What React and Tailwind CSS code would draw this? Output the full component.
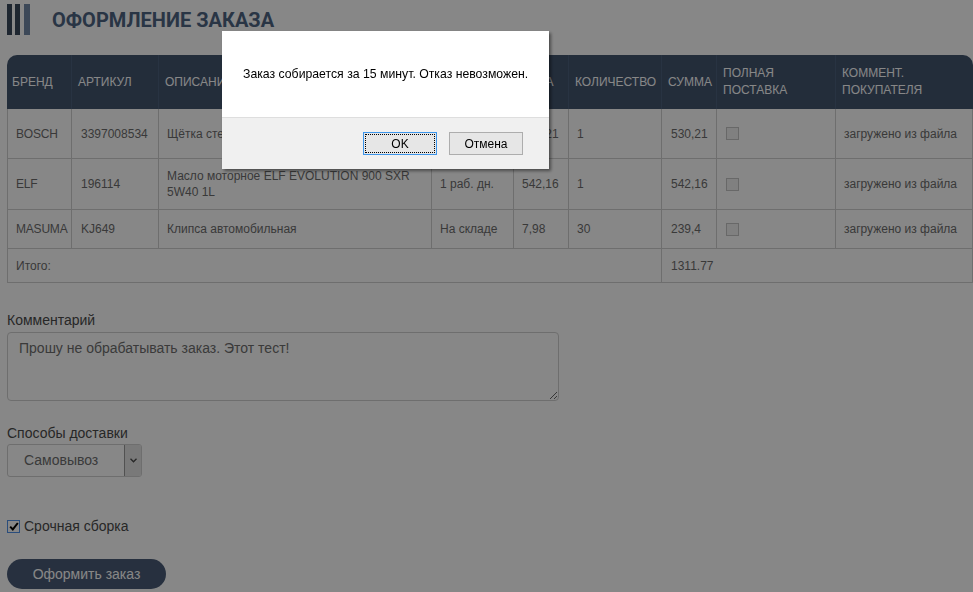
import React from 'react';

const rows = [
  {
    brand: 'BOSCH',
    article: '3397008534',
    descr: 'Щётка стеклоочистителя 600 мм',
    stock: 'На складе',
    price: '530,21',
    qty: '1',
    sum: '530,21',
    h: 'h-[50px]',
  },
  {
    brand: 'ELF',
    article: '196114',
    descr: 'Масло моторное ELF EVOLUTION 900 SXR 5W40 1L',
    stock: '1 раб. дн.',
    price: '542,16',
    qty: '1',
    sum: '542,16',
    h: 'h-[51px]',
  },
  {
    brand: 'MASUMA',
    article: 'KJ649',
    descr: 'Клипса автомобильная',
    stock: 'На складе',
    price: '7,98',
    qty: '30',
    sum: '239,4',
    h: 'h-[39px]',
  },
];

const th = 'border-r border-[#4d617d] px-[6px] text-left align-middle font-normal uppercase leading-[17px]';
const td = 'border-b border-r border-[#d0d0d0] pl-[8px] pr-[4px] align-middle leading-[16px]';

const App = () => {
  return (
    <div className="relative min-h-screen bg-white pl-[7px] pt-[4px] font-['Liberation_Sans',Arial,sans-serif] text-[#4b4b4b]">
      {/* page title */}
      <div className="flex items-start">
        <div className="flex h-[31px] gap-[3px]">
          <div className="w-[5px] bg-[#39485c]" />
          <div className="w-[5px] bg-[#39485c]" />
          <div className="ml-[1px] w-[6px] bg-[#7188a6]" />
        </div>
        <h1 className="ml-[22px] mt-[4px] font-['Roboto',sans-serif] text-[20px] font-bold leading-[24px] text-[#4f6583]">
          ОФОРМЛЕНИЕ ЗАКАЗА
        </h1>
      </div>

      {/* order table */}
      <table className="mt-[20px] w-[966px] table-fixed border-separate border-spacing-0 text-[12px] text-[#6d6d6d]">
        <colgroup>
          <col className="w-[65px]" />
          <col className="w-[87px]" />
          <col className="w-[273px]" />
          <col className="w-[82px]" />
          <col className="w-[55px]" />
          <col className="w-[93px]" />
          <col className="w-[55px]" />
          <col className="w-[119px]" />
          <col className="w-[137px]" />
        </colgroup>
        <thead>
          <tr className="h-[54px] bg-[#42556f] text-white">
            <th className={`${th} rounded-tl-[10px] pl-[5px]`}>Бренд</th>
            <th className={th}>Артикул</th>
            <th className={th}>Описание</th>
            <th className={th}>Наличие</th>
            <th className={th}>Цена</th>
            <th className={th}>Количество</th>
            <th className={th}>Сумма</th>
            <th className={th}>Полная поставка</th>
            <th className={`${th} rounded-tr-[10px] border-r-0`}>Коммент. покупателя</th>
          </tr>
        </thead>
        <tbody>
          {rows.map((r) => (
            <tr key={r.article} className={r.h}>
              <td className={`${td} border-l pl-[7px] tracking-[-0.2px]`}>{r.brand}</td>
              <td className={`${td} pl-[9px]`}>{r.article}</td>
              <td className={td}>{r.descr}</td>
              <td className={td}>{r.stock}</td>
              <td className={td}>{r.price}</td>
              <td className={td}>{r.qty}</td>
              <td className={`${td} pl-[9px]`}>{r.sum}</td>
              <td className={`${td} pl-[9px]`}>
                <div className="h-[13px] w-[13px] border border-[#c4c4c4] bg-[#f2f2f2]" />
              </td>
              <td className={td}>загружено из файла</td>
            </tr>
          ))}
          <tr className="h-[34px]">
            <td colSpan={6} className={`${td} border-l`}>Итого:</td>
            <td colSpan={3} className={`${td} pl-[9px]`}>1311.77</td>
          </tr>
        </tbody>
      </table>

      {/* comment */}
      <div className="mt-[29px] text-[14px] leading-4">Комментарий</div>
      <textarea
        defaultValue="Прошу не обрабатывать заказ. Этот тест!"
        className="mt-[4px] block h-[69px] w-[552px] rounded-[4px] border border-[#d0d0d0] bg-white pl-[11px] pt-[7px] text-[14px] leading-4 text-[#6e6e6e] outline-none"
      />

      {/* delivery */}
      <div className="mt-[24px] text-[14px] leading-4">Способы доставки</div>
      <div className="mt-[3px] flex h-[33px] w-[135px] overflow-hidden rounded-[3px] border border-[#d0d0d0] bg-white text-[14px] text-[#6e6e6e]">
        <div className="flex flex-1 items-center pl-[16px]">Самовывоз</div>
        <div className="flex w-[17px] items-center justify-center border-l border-[#9a9a9a] bg-[#e4e4e4]">
          <svg width="7" height="5" viewBox="0 0 7 5" fill="none">
            <path d="M0.5 0.8 L3.5 3.8 L6.5 0.8" stroke="#4a4a4a" strokeWidth="1.3" />
          </svg>
        </div>
      </div>

      {/* urgent */}
      <label className="mt-[41px] flex h-4 items-center text-[14px] leading-4">
        <span className="flex h-[13px] w-[13px] items-center justify-center border border-[#5091eb] bg-white">
          <svg width="10" height="9" viewBox="0 0 10 9" fill="none">
            <path d="M1.2 4.6 L3.8 7.4 L8.8 1" stroke="#000" strokeWidth="2" />
          </svg>
        </span>
        <span className="ml-[4px]">Срочная сборка</span>
      </label>

      <button className="mt-[25px] h-[30px] w-[159px] rounded-full bg-[#4a5c77] text-[14px] text-white">
        Оформить заказ
      </button>

      {/* modal */}
      <div className="fixed inset-0 bg-black/[0.47]" />
      <div className="fixed left-[222px] top-[31px] w-[327px] bg-white text-[12px] text-black shadow-[2px_2px_3px_rgba(0,0,0,0.45)]">
        <div className="flex h-[86px] items-center pl-[21px] text-[12.25px]">
          Заказ собирается за 15 минут. Отказ невозможен.
        </div>
        <div className="flex h-[52px] items-start justify-end gap-[12px] border-t border-[#dedede] bg-[#f0f0f0] pr-[26px] pt-[14px]">
          <button className="h-[23px] w-[74px] border border-[#3d95ea] bg-[#e6e6e6] p-[1px]">
            <span className="flex h-full w-full items-center justify-center border border-dotted border-black">
              OK
            </span>
          </button>
          <button className="h-[23px] w-[74px] border border-[#adadad] bg-[#e6e6e6]">Отмена</button>
        </div>
      </div>
    </div>
  );
};

export default App;
